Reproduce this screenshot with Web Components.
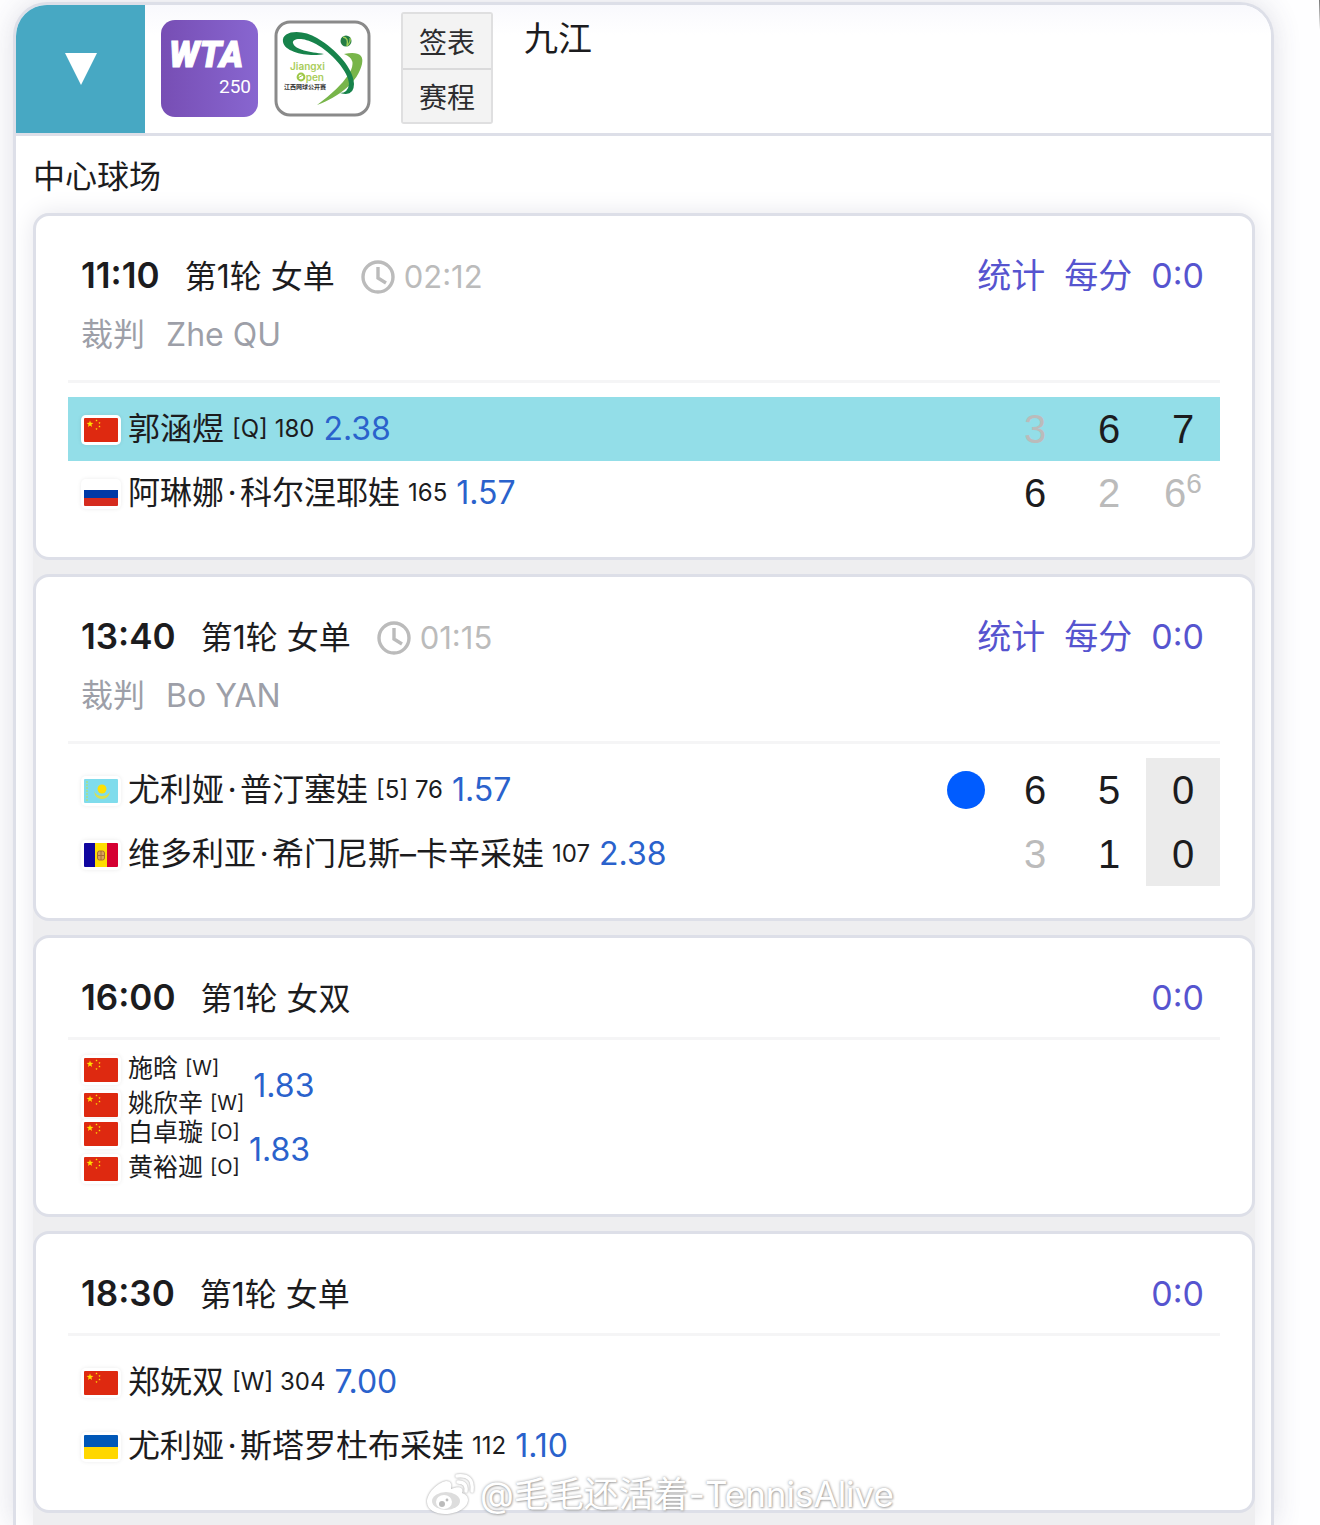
<!DOCTYPE html>
<html lang="zh-CN">
<head>
<meta charset="UTF-8">
<meta name="viewport" content="width=device-width, initial-scale=1">
<title>九江 赛程</title>
<style>
  body {
    margin: 0;
    min-height: 100vh;
    position: relative;
    overflow-x: hidden;
    background: linear-gradient(#777, transparent) top right / 1px 30px no-repeat, #fefeff;
    font-family: Inter, "Noto Sans CJK SC", sans-serif;
    color: #1c1c1e;
  }
</style>
</head>
<body>
<tour-panel>
  <tour-header slot="header" city="九江"></tour-header>
  <span slot="court">中心球场</span>
</tour-panel>
<weibo-mark>@毛毛还活着-TennisAlive</weibo-mark>

<script>
const matches = [
  {
    time: "11:10", round: "第1轮 女单", duration: "02:12", umpire: "Zhe QU",
    links: ["统计", "每分", "0:0"],
    sides: [
      { players: [["cn", "郭涵煜", "[Q] 180"]], odds: "2.38", win: true, scores: [["3", "lost"], ["6"], ["7"]] },
      { players: [["ru", "阿琳娜·科尔涅耶娃", "165"]], odds: "1.57", scores: [["6"], ["2", "lost"], ["6", "lost", "6"]] },
    ],
  },
  {
    time: "13:40", round: "第1轮 女单", duration: "01:15", umpire: "Bo YAN",
    links: ["统计", "每分", "0:0"],
    sides: [
      { players: [["kz", "尤利娅·普汀塞娃", "[5] 76"]], odds: "1.57", serving: true, scores: [["6"], ["5"], ["0", "point"]] },
      { players: [["ad", "维多利亚·希门尼斯–卡辛采娃", "107"]], odds: "2.38", scores: [["3", "lost"], ["1"], ["0", "point"]] },
    ],
  },
  {
    time: "16:00", round: "第1轮 女双", links: ["0:0"],
    sides: [
      { players: [["cn", "施晗", "[W]"], ["cn", "姚欣辛", "[W]"]], odds: "1.83", scores: [] },
      { players: [["cn", "白卓璇", "[O]"], ["cn", "黄裕迦", "[O]"]], odds: "1.83", scores: [] },
    ],
  },
  {
    time: "18:30", round: "第1轮 女单", links: ["0:0"],
    sides: [
      { players: [["cn", "郑妩双", "[W] 304"]], odds: "7.00", scores: [] },
      { players: [["ua", "尤利娅·斯塔罗杜布采娃", "112"]], odds: "1.10", scores: [] },
    ],
  },
];

// 国旗，viewBox 统一为 34x24
const star = (x, y, r) => {
  let points = "";
  for (let i = 0; i < 10; i++) {
    const a = (i * Math.PI) / 5 - Math.PI / 2;
    const d = i % 2 ? r * 0.4 : r;
    points += `${x + d * Math.cos(a)},${y + d * Math.sin(a)} `;
  }
  return `<polygon fill="#ffde00" points="${points}"/>`;
};
const flags = {
  cn: `<rect width="34" height="24" fill="#de2910"/>${star(6, 6, 3.6)}${star(12.5, 2.5, 1.2)}${star(15.5, 5, 1.2)}${star(15.5, 8.5, 1.2)}${star(12.5, 11, 1.2)}`,
  ru: `<rect width="34" height="24" fill="#fff"/><rect y="8" width="34" height="8" fill="#0039a6"/><rect y="16" width="34" height="8" fill="#d52b1e"/>`,
  kz: `<rect width="34" height="24" fill="#7fdcec"/><path d="M3 2v20" stroke="#a8e08c" stroke-width="1.6" stroke-dasharray="2 1"/><circle cx="18" cy="10" r="4.5" fill="#ffe000"/><path d="M10 12q1 8 8 8t8-8q-2 5-8 5t-8-5z" fill="#d8e052"/>`,
  ad: `<rect width="12" height="24" fill="#10069f"/><rect x="11" width="12" height="24" fill="#fedd00"/><rect x="23" width="11" height="24" fill="#d50032"/><rect x="13.5" y="8" width="7" height="9" rx="2" fill="#d9a35a" stroke="#a96a35"/><path d="M17 8v9M14 12.5h6" stroke="#a96a35"/>`,
  ua: `<rect width="34" height="12" fill="#0057b7"/><rect y="12" width="34" height="12" fill="#ffd700"/>`,
};

class CountryFlag extends HTMLElement {
  constructor() {
    super();
    this.attachShadow({ mode: "open" });
  }
  connectedCallback() {
    this.shadowRoot.innerHTML = `
      <style>
        :host { display: block; flex: none; width: 34px; height: 24px; margin: 2px 10px 0 3px; border-radius: 2px; background: #fff; box-shadow: 0 0 0 3px #fff, 0 0 4px 3px rgba(0, 0, 0, .08); }
        svg { display: block; border-radius: 1px; }
      </style>
      <svg width="34" height="24" viewBox="0 0 34 24" aria-hidden="true">${flags[this.getAttribute("code")]}</svg>`;
  }
}
customElements.define("country-flag", CountryFlag);

class MatchCard extends HTMLElement {
  constructor() {
    super();
    this.attachShadow({ mode: "open" });
  }

  set match(m) {
    this.shadowRoot.innerHTML = `
      <style>
        :host { display: block; box-sizing: border-box; border: 3px solid #dddfe8; border-radius: 16px; padding: 31px 32px 32px; background: #fff; }
        header { padding: 0 16px 12px 13px; border-bottom: 3px solid #f5f5f6; margin-bottom: 14px; }
        .top { display: flex; align-items: baseline; height: 56px; line-height: 56px; white-space: nowrap; }
        .time { font-size: 35px; font-weight: 600; margin-right: 25px; }
        .round { font-size: 32px; }
        .clock { display: flex; align-items: baseline; gap: 9px; margin-left: 26px; font-size: 31px; color: #bbb; }
        .clock svg { align-self: center; }
        nav { display: flex; align-items: baseline; gap: 19px; margin-left: auto; font-size: 34px; }
        a { color: #5654cf; text-decoration: none; }
        .umpire { display: flex; gap: 21px; font-size: 32px; line-height: 64px; padding-bottom: 1px; color: #9d9fa8; }
        table { width: 100%; border-collapse: collapse; table-layout: fixed; }
        td { padding: 0; height: 64px; }
        .serve { width: 64px; }
        .set { width: 74px; }
        .win { background: #93dee8; }
        .side { display: flex; align-items: center; height: 64px; padding-left: 13px; white-space: nowrap; }
        .pair { display: flex; flex-direction: column; justify-content: space-between; height: 64px; }
        .player { display: flex; align-items: center; line-height: 64px; font-size: 32px; }
        .player i { width: 16px; text-align: center; font-style: normal; }
        .player small { font-size: 24px; margin-left: 8px; }
        .doubles .player { line-height: 29px; font-size: 25px; }
        .doubles small { font-size: 20px; margin-left: 7px; }
        .odds { margin-left: 9px; font-size: 32px; line-height: 64px; color: #2a62cc; }
        .score { text-align: center; font: 40px/64px "Liberation Sans", Arial, sans-serif; }
        .lost { color: #bbb; }
        .point { background: #ebebeb; }
        sup { font-size: 28px; line-height: 0; vertical-align: 14px; }
        .ball { display: block; width: 38px; height: 38px; margin: auto; border-radius: 50%; background: #005cff; }
      </style>
      <header>
        <div class="top">
          <span class="time">${m.time}</span>
          <span class="round">${m.round}</span>
          ${m.duration ? `<span class="clock">
            <svg width="34" height="34" viewBox="0 0 34 34" fill="none" stroke="#bbb" stroke-width="3.4" aria-hidden="true"><circle cx="17" cy="17" r="15"/><path d="M17 7v11l8 5"/></svg>
            <span>${m.duration}</span></span>` : ""}
          <nav>${m.links.map((l) => `<a href="#">${l}</a>`).join("")}</nav>
        </div>
        ${m.umpire ? `<div class="umpire"><span>裁判</span><span>${m.umpire}</span></div>` : ""}
      </header>
      <table>
        <colgroup><col><col class="serve"><col class="set"><col class="set"><col class="set"></colgroup>
        ${m.sides.map((s) => this.row(s)).join("")}
      </table>`;
  }

  row(side) {
    // 间隔号占半个汉字宽
    const players = side.players.map(([code, name, note]) =>
      `<div class="player"><country-flag code="${code}"></country-flag>${name.replace("·", "<i>·</i>")}<small>${note}</small></div>`).join("");
    const scores = [0, 1, 2].map((i) => {
      const [value, kind, tiebreak] = side.scores[i] || ["", ""];
      return `<td class="score ${kind || ""}">${value}${tiebreak ? `<sup>${tiebreak}</sup>` : ""}</td>`;
    }).join("");
    return `<tr class="${side.win ? "win" : ""}">
      <td><div class="side ${side.players.length > 1 ? "doubles" : ""}"><div class="pair">${players}</div><span class="odds">${side.odds}</span></div></td>
      <td>${side.serving ? '<span class="ball"></span>' : ""}</td>${scores}</tr>`;
  }
}
customElements.define("match-card", MatchCard);

class TourHeader extends HTMLElement {
  constructor() {
    super();
    this.attachShadow({ mode: "open" }).innerHTML = `
      <style>
        :host { display: flex; align-items: flex-start; height: 128px; border-bottom: 3px solid #dddfe8; background: linear-gradient(#f9f9fd, #fff 30px); }
        button { font-family: inherit; padding: 0; color: #2c2c2e; }
        .toggle { width: 129px; height: 128px; border: 0; border-top-left-radius: 28px; background: #47a8c3; display: flex; align-items: center; justify-content: center; }
        .logo { display: block; margin: 15px 0 0 16px; }
        .menu { display: flex; flex-direction: column; margin: 7px 0 0 30px; border: 2px solid #dfdfe0; border-radius: 3px; }
        .menu button { width: 88px; height: 54px; border: 0; background: #f3f3f3; font-size: 28px; }
        .menu button + button { border-top: 2px solid #dadadb; }
        h1 { margin: 9px 0 0 31px; font-size: 34px; font-weight: 400; line-height: 50px; }
      </style>
      <button class="toggle" aria-label="收起">
        <svg width="32" height="32" viewBox="0 0 32 32"><path d="M0 0h32L16 32z" fill="#fff"/></svg>
      </button>
      <svg class="logo" width="97" height="97" viewBox="0 0 97 97">
        <defs><linearGradient id="g"><stop stop-color="#774eb4"/><stop offset="1" stop-color="#8866d0"/></linearGradient></defs>
        <rect width="97" height="97" rx="14" fill="url(#g)"/>
        <text x="8" y="47" font-family="Roboto, sans-serif" font-size="36" font-weight="900" font-style="italic" fill="#fff" stroke="#fff">WTA</text>
        <text x="90" y="73" text-anchor="end" font-family="Roboto, sans-serif" font-size="19" fill="#fff">250</text>
      </svg>
      <svg class="logo" width="97" height="97" viewBox="0 0 97 97">
        <rect x="2" y="2" width="93" height="93" rx="14" fill="#fff" stroke="#8a8a8a" stroke-width="3"/>
        <path d="M70 34Q91 30 88 44C84 62 65 77 43 85Q65 69 75 54Q84 39 70 34z" fill="#78b54a"/>
        <path d="M50 34C36 37 11 33 9 22C7 10 29 9 43 18C62 29 80 49 80 64Q80 77 66 73Q74 73 75 64C75 52 57 32 42 24C27 16 18 19 19 23C21 30 36 32 50 34z" fill="#17834b"/>
        <circle cx="72" cy="21" r="5.5" fill="#247c45"/><path d="M69 17q6 1 4 9M76 18q1 4-3 8" stroke="#9dce57" stroke-width="1.4" fill="none"/>
        <g font-family="Inter" font-size="10" font-weight="600" fill="#a9cd5b"><text x="16" y="50">Jiangxi</text><text x="50" y="61" text-anchor="end">pen</text></g>
        <circle cx="27" cy="57" r="3.4" fill="none" stroke="#9dc746" stroke-width="2"/><path d="M24 58l5-3" stroke="#9dc746"/>
        <text x="10" y="69" font-family="Noto Sans CJK SC" font-size="6" font-weight="700" fill="#333">江西网球公开赛</text>
      </svg>
      <div class="menu"><button>签表</button><button>赛程</button></div>
      <h1></h1>`;
  }
  connectedCallback() {
    this.shadowRoot.querySelector("h1").textContent = this.getAttribute("city");
  }
}
customElements.define("tour-header", TourHeader);

class TourPanel extends HTMLElement {
  constructor() {
    super();
    const shadow = this.attachShadow({ mode: "open" });
    shadow.innerHTML = `
      <style>
        :host { display: block; padding: 2px 46px 0 13px; overflow: hidden; }
        section { border: 3px solid #dddfe8; border-bottom: 0; border-radius: 34px 34px 0 0; background: #fff; box-shadow: 0 0 28px rgba(60, 60, 100, .16); overflow: hidden; }
        h2 { margin: 0; padding: 17px 17px 12px; font-size: 32px; font-weight: 400; line-height: 48px; }
        .list { display: flex; flex-direction: column; gap: 14px; margin: 0 16px 0 17px; padding-bottom: 12px; border-radius: 16px 16px 0 0; background: #eeeef0; box-shadow: 0 0 24px #e6e6ec; }
      </style>
      <section>
        <slot name="header"></slot>
        <h2><slot name="court"></slot></h2>
        <div class="list"></div>
      </section>`;
    const list = shadow.querySelector(".list");
    matches.forEach((m) => {
      const card = document.createElement("match-card");
      card.match = m;
      list.appendChild(card);
    });
  }
}
customElements.define("tour-panel", TourPanel);

// 浮在页面底部的微博水印
class WeiboMark extends HTMLElement {
  constructor() {
    super();
    this.attachShadow({ mode: "open" }).innerHTML = `
      <style>
        :host { position: absolute; left: 0; right: 0; bottom: 9px; display: flex; justify-content: center; align-items: center; gap: 4px; font-size: 35px; line-height: 44px; color: #fff; text-shadow: 0 0 3px #999, 1px 1px 2px #bbb; pointer-events: none; }
        svg { filter: drop-shadow(0 0 1px #999); }
      </style>
      <svg width="50" height="42" viewBox="0 0 50 42" fill="#fff" aria-hidden="true">
        <path d="M20 8C11 10 1 20 1 29c0 8 9 12 18 12 13 0 23-7 23-14 0-4-3-6-6-7 2-5-2-8-11-4 1-5 0-8-5-8z"/>
        <ellipse cx="20" cy="28" rx="14" ry="9" fill="#ddd"/><ellipse cx="18" cy="29" rx="8" ry="7"/><circle cx="16" cy="31" r="3" fill="#bbb"/><circle cx="21" cy="27" r="1.4" fill="#bbb"/>
        <path d="M32 9q9 0 8 9M31 3q17-2 15 15" fill="none" stroke="#fff" stroke-width="3.4" stroke-linecap="round"/>
      </svg>
      <span><slot></slot></span>`;
  }
}
customElements.define("weibo-mark", WeiboMark);
</script>
</body>
</html>
